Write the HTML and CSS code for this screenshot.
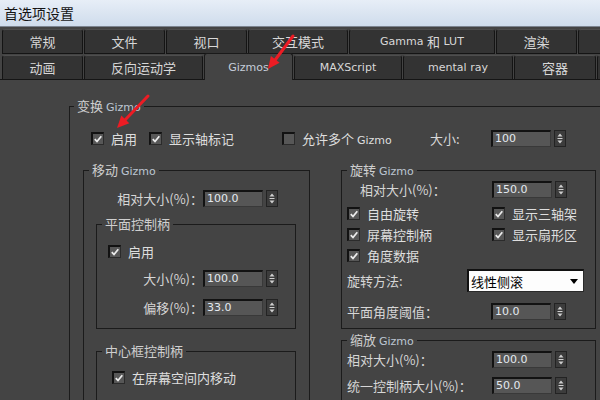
FILE: index.html
```html
<!DOCTYPE html>
<html lang="zh-CN">
<head>
<meta charset="utf-8">
<title>首选项设置</title>
<link rel="stylesheet" href="styles.css">
</head>
<body>
<div class="titlebar">首选项设置</div>
<div class="tabs">
  <div class="tabrow r1">
    <div class="tab">常规</div>
    <div class="tab">文件</div>
    <div class="tab">视口</div>
    <div class="tab">交互模式</div>
    <div class="tab"><span class="en">Gamma&nbsp;</span>和<span class="en">&nbsp;LUT</span></div>
    <div class="tab">渲染</div>
    <div class="tab"></div>
  </div>
  <div class="tabrow r2">
    <div class="tab">动画</div>
    <div class="tab">反向运动学</div>
    <div class="tab sel"><span class="en">Gizmos</span></div>
    <div class="tab"><span class="en">MAXScript</span></div>
    <div class="tab"><span class="en">mental ray</span></div>
    <div class="tab">容器</div>
    <div class="tab"></div>
  </div>
</div>

<div class="group outer">
  <div class="legend">变换 <span class="en">Gizmo</span></div>
  <div class="toprow">
    <div class="chk"><span class="cb"><svg viewBox="0 0 10 10"><path d="M1.8 5.2L4 7.5L8.3 2.3"/></svg></span><span>启用</span></div>
    <div class="chk"><span class="cb"><svg viewBox="0 0 10 10"><path d="M1.8 5.2L4 7.5L8.3 2.3"/></svg></span><span>显示轴标记</span></div>
    <div class="chk"><span class="cb off"></span><span>允许多个 <span class="en">Gizmo</span></span></div>
    <div class="plain">大小:</div>
    <div class="field"><div class="num">100</div><div class="spin"><svg viewBox="0 0 10 15"><path d="M2.5 5.5h5L5 2.5z M2.5 7h5v1h-5z M2.5 9.5h5L5 12.5z"/></svg></div></div>
  </div>

  <div class="cols">
    <div class="group move">
      <div class="legend">移动 <span class="en">Gizmo</span></div>
      <div class="srow">
        <div class="lbl">相对大小(%)：</div>
        <div class="field"><div class="num">100.0</div><div class="spin"><svg viewBox="0 0 10 15"><path d="M2.5 5.5h5L5 2.5z M2.5 7h5v1h-5z M2.5 9.5h5L5 12.5z"/></svg></div></div>
      </div>
      <div class="group plane">
        <div class="legend">平面控制柄</div>
        <div class="chkrow">
          <div class="chk"><span class="cb"><svg viewBox="0 0 10 10"><path d="M1.8 5.2L4 7.5L8.3 2.3"/></svg></span><span>启用</span></div>
        </div>
        <div class="srow s1">
          <div class="lbl">大小(%)：</div>
          <div class="field"><div class="num">100.0</div><div class="spin"><svg viewBox="0 0 10 15"><path d="M2.5 5.5h5L5 2.5z M2.5 7h5v1h-5z M2.5 9.5h5L5 12.5z"/></svg></div></div>
        </div>
        <div class="srow s2">
          <div class="lbl">偏移(%)：</div>
          <div class="field"><div class="num">33.0</div><div class="spin"><svg viewBox="0 0 10 15"><path d="M2.5 5.5h5L5 2.5z M2.5 7h5v1h-5z M2.5 9.5h5L5 12.5z"/></svg></div></div>
        </div>
      </div>
      <div class="group center">
        <div class="legend">中心框控制柄</div>
        <div class="chkrow">
          <div class="chk"><span class="cb"><svg viewBox="0 0 10 10"><path d="M1.8 5.2L4 7.5L8.3 2.3"/></svg></span><span>在屏幕空间内移动</span></div>
        </div>
      </div>
    </div>

    <div class="rcol">
      <div class="group rot">
        <div class="legend">旋转 <span class="en">Gizmo</span></div>
        <div class="srow r-first">
          <div class="lbl">相对大小(%)：</div>
          <div class="field"><div class="num">150.0</div><div class="spin"><svg viewBox="0 0 10 15"><path d="M2.5 5.5h5L5 2.5z M2.5 7h5v1h-5z M2.5 9.5h5L5 12.5z"/></svg></div></div>
        </div>
        <div class="checks">
          <div class="chk"><span class="cb"><svg viewBox="0 0 10 10"><path d="M1.8 5.2L4 7.5L8.3 2.3"/></svg></span><span>自由旋转</span></div>
          <div class="chk"><span class="cb"><svg viewBox="0 0 10 10"><path d="M1.8 5.2L4 7.5L8.3 2.3"/></svg></span><span>显示三轴架</span></div>
          <div class="chk"><span class="cb"><svg viewBox="0 0 10 10"><path d="M1.8 5.2L4 7.5L8.3 2.3"/></svg></span><span>屏幕控制柄</span></div>
          <div class="chk"><span class="cb"><svg viewBox="0 0 10 10"><path d="M1.8 5.2L4 7.5L8.3 2.3"/></svg></span><span>显示扇形区</span></div>
          <div class="chk"><span class="cb"><svg viewBox="0 0 10 10"><path d="M1.8 5.2L4 7.5L8.3 2.3"/></svg></span><span>角度数据</span></div>
        </div>
        <div class="method">
          <div class="lbl">旋转方法:</div>
          <div class="select"><span>线性侧滚</span><svg viewBox="0 0 8 5"><path d="M0 0h8L4 5z"/></svg></div>
        </div>
        <div class="srow r-thr">
          <div class="lbl">平面角度阈值：</div>
          <div class="field"><div class="num">10.0</div><div class="spin"><svg viewBox="0 0 10 15"><path d="M2.5 5.5h5L5 2.5z M2.5 7h5v1h-5z M2.5 9.5h5L5 12.5z"/></svg></div></div>
        </div>
      </div>
      <div class="group scale">
        <div class="legend">缩放 <span class="en">Gizmo</span></div>
        <div class="srow c1">
          <div class="lbl">相对大小(%)：</div>
          <div class="field"><div class="num">100.0</div><div class="spin"><svg viewBox="0 0 10 15"><path d="M2.5 5.5h5L5 2.5z M2.5 7h5v1h-5z M2.5 9.5h5L5 12.5z"/></svg></div></div>
        </div>
        <div class="srow c2">
          <div class="lbl">统一控制柄大小(%)：</div>
          <div class="field"><div class="num">50.0</div><div class="spin"><svg viewBox="0 0 10 15"><path d="M2.5 5.5h5L5 2.5z M2.5 7h5v1h-5z M2.5 9.5h5L5 12.5z"/></svg></div></div>
        </div>
      </div>
    </div>
  </div>
</div>

<svg class="arrows" viewBox="0 0 600 400" width="600" height="400">
  <line x1="293" y1="36" x2="275.5" y2="59.5"/>
  <polygon points="268,69 279.6,62.8 270.9,56.1"/>
  <line x1="148" y1="96" x2="125.5" y2="119.5"/>
  <polygon points="117,128 129.3,123.3 121.3,115.5"/>
</svg>
</body>
</html>
```
FILE: styles.css
```css
html, body {
  margin: 0;
  padding: 0;
}
html {
  overflow: hidden;
}
body {
  width: 600px;
  height: 400px;
  overflow: hidden;
  position: relative;
  background: #444444;
  font-family: "Noto Sans CJK SC", "DejaVu Sans", sans-serif;
  font-size: 13px;
  color: #d6d6d6;
}
.en {
  font-family: "DejaVu Sans", "Noto Sans CJK SC", sans-serif;
  font-size: 11px;
}

/* title bar */
.titlebar {
  height: 27px;
  box-sizing: border-box;
  padding-left: 4px;
  line-height: 26px;
  font-size: 14px;
  color: #141414;
  background: linear-gradient(#e7eef7, #cfdcec);
  border-bottom: 1px solid #7c8490;
}

/* tabs */
.tabs {
  padding-top: 2px;
}
.tabrow {
  display: grid;
  column-gap: 1px;
  padding-left: 2px;
  height: 25px;
}
.r1 {
  grid-template-columns: 81px 81px 81px 100px 146px 81px 40px;
}
.r2 {
  grid-template-columns: 81px 119px 89px 108px 110px 82px 20px;
  margin-top: 1px;
  height: 24px;
  border-bottom: 1px solid #151515;
}
.tab {
  box-sizing: border-box;
  background: #333333;
  border: 1px solid #141414;
  border-top-color: #4e4e4e;
  border-radius: 3px 3px 0 0;
  display: flex;
  align-items: center;
  justify-content: center;
  white-space: nowrap;
  overflow: hidden;
  color: #d8d8d8;
}
.r2 .tab {
  border-bottom: none;
}
.tab.sel {
  background: #444444;
  margin-top: -2px;
  margin-bottom: -1px;
  border-color: #1a1a1a;
  color: #c6ceda;
}

/* group boxes */
.group {
  box-sizing: border-box;
  border: 1px solid #1b1b1b;
}
.legend {
  width: fit-content;
  height: 14px;
  line-height: 14px;
  margin: -8px 0 0 5px;
  padding: 0 3px;
  background: #444444;
  color: #cfcfcf;
  white-space: nowrap;
}
.legend .en {
  color: #bcc6d2;
}
.outer {
  width: 560px;
  height: 294px;
  margin: 26px 0 0 69px;
  border-bottom: none;
}
.outer > .legend {
  margin-left: 4px;
}

/* checkboxes */
.chk {
  display: flex;
  align-items: center;
  gap: 7px;
  white-space: nowrap;
  color: #dedede;
}
.cb {
  flex: none;
  width: 13px;
  height: 13px;
  box-sizing: border-box;
  border-top: 2px solid #121212;
  border-left: 2px solid #121212;
  border-right: 1px solid #2b2b2b;
  border-bottom: 1px solid #2b2b2b;
  background: #575757;
}
.cb svg {
  display: block;
  width: 10px;
  height: 10px;
}
.cb path {
  fill: none;
  stroke: #ececec;
  stroke-width: 1.8;
}

/* numeric fields */
.field {
  display: flex;
  gap: 3px;
}
.num {
  width: 60px;
  height: 17px;
  box-sizing: border-box;
  padding-left: 2px;
  background: #565656;
  border-top: 2px solid #121212;
  border-left: 2px solid #121212;
  border-right: 1px solid #393939;
  border-bottom: 1px solid #393939;
  font-family: "DejaVu Sans", sans-serif;
  font-size: 11px;
  line-height: 14px;
  color: #e4e9ef;
}
.spin {
  width: 12px;
  height: 17px;
  box-sizing: border-box;
  border: 1px solid #232323;
  background: #3c3c3c;
}
.spin svg {
  display: block;
  width: 10px;
  height: 15px;
}
.spin path {
  fill: #cfcfcf;
}

/* top row */
.toprow {
  display: grid;
  grid-template-columns: 58px 133px 148px 61px auto;
  align-items: center;
  height: 17px;
  margin: 16px 0 0 21px;
}
.plain {
  color: #d8d8d8;
}

/* columns */
.cols {
  display: flex;
  align-items: flex-start;
  gap: 31px;
  margin: 24px 0 0 13px;
}
.srow {
  display: flex;
  align-items: center;
  height: 17px;
}
.lbl {
  white-space: nowrap;
  color: #d6d6d6;
}

/* move gizmo */
.move {
  width: 227px;
  height: 230px;
  border-bottom: none;
}
.move > .srow {
  margin-top: 13px;
}
.move .lbl {
  width: 119px;
  text-align: right;
}
.plane {
  width: 200px;
  margin: 17px 0 0 12px;
  padding-bottom: 12px;
}
.plane .chkrow {
  display: flex;
  align-items: center;
  height: 17px;
  margin-top: 12px;
  padding-left: 11px;
}
.plane .lbl {
  width: 106px;
}
.plane .s1 {
  margin-top: 10px;
}
.plane .s2 {
  margin-top: 12px;
}
.center {
  width: 200px;
  height: 49px;
  margin: 22px 0 0 12px;
  border-bottom: none;
}
.center .chkrow {
  display: flex;
  align-items: center;
  height: 17px;
  margin-top: 11px;
  padding-left: 15px;
}

/* right column */
.rcol {
  width: 255px;
  display: flex;
  flex-direction: column;
}
.rot {
  padding-bottom: 8px;
}
.r-first {
  margin-top: 4px;
  padding-left: 18px;
}
.r-first .lbl {
  width: 132px;
}
.checks {
  display: grid;
  grid-template-columns: 145px auto;
  row-gap: 8px;
  margin-top: 9px;
  padding-left: 5px;
}
.checks .chk {
  height: 13px;
}
.method {
  display: flex;
  align-items: center;
  height: 23px;
  margin-top: 7px;
  padding-left: 5px;
}
.method .lbl {
  width: 120px;
}
.select {
  width: 117px;
  height: 23px;
  box-sizing: border-box;
  display: flex;
  align-items: center;
  justify-content: space-between;
  padding: 0 5px 0 2px;
  background: #fdfdfd;
  border: 1px solid #2a2a2a;
  border-top: 2px solid #111111;
  border-left: 2px solid #111111;
  color: #000000;
}
.select svg {
  width: 8px;
  height: 5px;
}
.select path {
  fill: #000000;
}
.r-thr {
  margin-top: 11px;
  padding-left: 5px;
}
.r-thr .lbl {
  width: 144px;
}
.scale {
  height: 60px;
  margin-top: 11px;
  border-bottom: none;
}
.scale .srow {
  padding-left: 5px;
}
.scale .lbl {
  width: 145px;
}
.scale .c1 {
  margin-top: 4px;
}
.scale .c2 {
  margin-top: 9px;
}

/* annotation arrows */
.arrows {
  position: absolute;
  left: 0;
  top: 0;
  pointer-events: none;
}
.arrows line {
  stroke: #ec1c24;
  stroke-width: 3;
  stroke-linecap: round;
}
.arrows polygon {
  fill: #ec1c24;
}
```
